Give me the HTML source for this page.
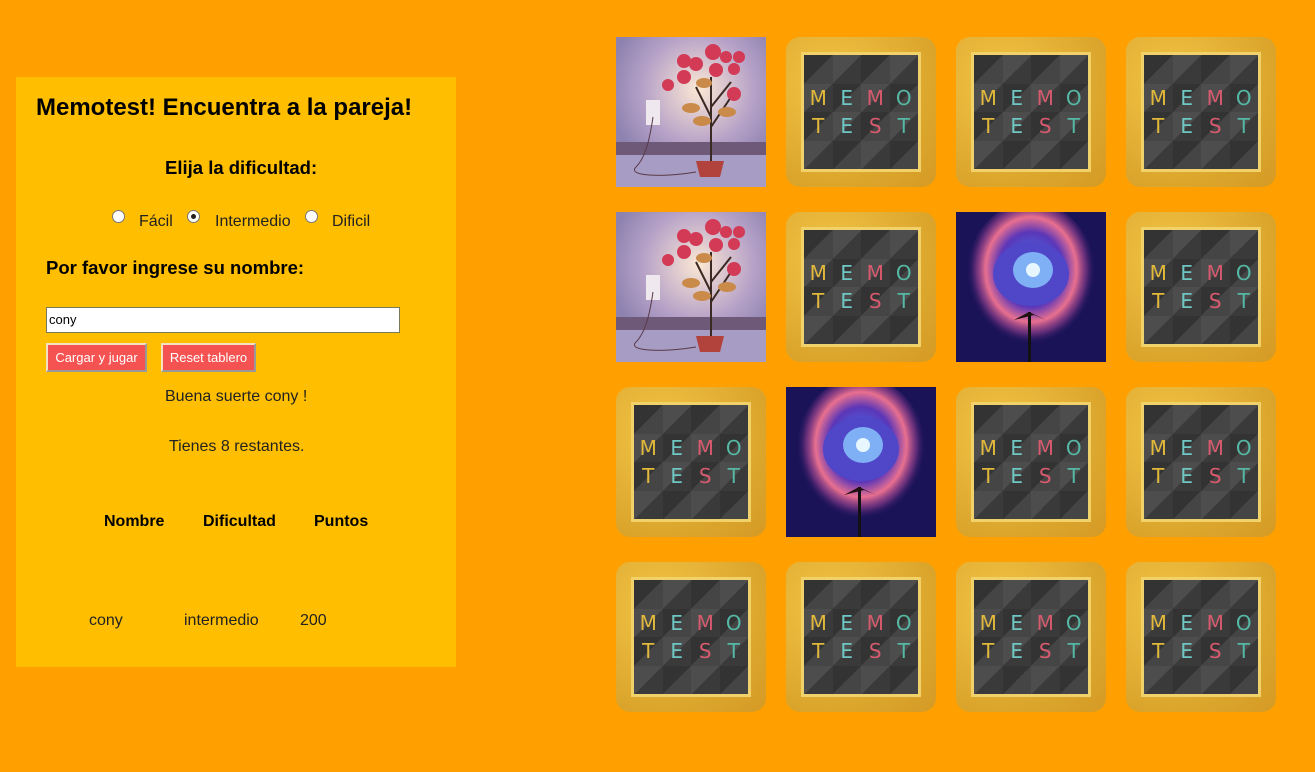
<!DOCTYPE html>
<html><head><meta charset="utf-8"><style>
body{margin:0;width:1315px;height:772px;background:#ffa000;font-family:"Liberation Sans",Arial,sans-serif;position:relative;overflow:hidden}
.a{position:absolute;white-space:nowrap}
#panel{position:absolute;left:16px;top:77px;width:440px;height:590px;background:#ffbf00}
.radio{position:absolute;width:11px;height:11px;border-radius:50%;background:#fff;border:1px solid #777}
.radio.on::after{content:"";position:absolute;left:3px;top:3px;width:5px;height:5px;border-radius:50%;background:#222}
.btn{position:absolute;height:29px;background:#f55252;color:#fff;font-size:13px;line-height:25px;text-align:center;border:2px solid;border-color:#f5e0c0 #999 #999 #f5e0c0;box-sizing:border-box}
.card{position:absolute;width:150px;height:150px}
.memo{border-radius:14px;background:radial-gradient(circle at 30% 30%,#f2c445,#dba52c 70%,#d49a25)}
.memo .in{position:absolute;left:15px;top:15px;width:114px;height:114px;border:3px solid #f1d26a;display:grid;grid-template-columns:repeat(4,1fr);grid-template-rows:repeat(4,1fr);background:#3a3a3a}
.memo .in div{font-size:20px;text-align:center;line-height:28.5px;font-family:"DejaVu Sans",sans-serif;font-weight:normal}
.c1{background:linear-gradient(135deg,#4d4d4d 50%,#3a3a3a 50%)}
.c2{background:linear-gradient(135deg,#333 50%,#454545 50%)}
</style></head><body>
<div id="panel"></div>
<div class="a" style="left:36px;top:94px;font-size:24px;font-weight:bold">Memotest! Encuentra a la pareja!</div>
<div class="a" style="left:165px;top:157px;font-size:18.5px;font-weight:bold">Elija la dificultad:</div>
<div class="radio" style="left:112px;top:210px"></div><div class="a" style="left:139px;top:213px;font-size:16px;color:#222">Fácil</div>
<div class="radio on" style="left:187px;top:210px"></div><div class="a" style="left:215px;top:213px;font-size:16px;color:#222">Intermedio</div>
<div class="radio" style="left:305px;top:210px"></div><div class="a" style="left:332px;top:213px;font-size:16px;color:#222">Dificil</div>
<div class="a" style="left:46px;top:257px;font-size:18.5px;font-weight:bold">Por favor ingrese su nombre:</div>
<div class="a" style="left:46px;top:307px;height:26px;background:#fff;border:1px solid #7a7a5a;font-size:13px;line-height:24px;padding-left:2px;box-sizing:border-box;width:354px">cony</div>
<div class="btn" style="left:46px;top:343px;width:101px">Cargar y jugar</div>
<div class="btn" style="left:161px;top:343px;width:95px">Reset tablero</div>
<div class="a" style="left:165px;top:388px;font-size:16px;color:#222">Buena suerte cony !</div>
<div class="a" style="left:169px;top:438px;font-size:16px;color:#222">Tienes 8 restantes.</div>
<div class="a" style="left:104px;top:513px;font-size:16px;font-weight:bold">Nombre</div>
<div class="a" style="left:203px;top:513px;font-size:16px;font-weight:bold">Dificultad</div>
<div class="a" style="left:314px;top:513px;font-size:16px;font-weight:bold">Puntos</div>
<div class="a" style="left:89px;top:612px;font-size:16px;color:#222">cony</div>
<div class="a" style="left:184px;top:612px;font-size:16px;color:#222">intermedio</div>
<div class="a" style="left:300px;top:612px;font-size:16px;color:#222">200</div>

<svg width="0" height="0" style="position:absolute">
<defs>
<radialGradient id="pg" cx="0.55" cy="0.35" r="0.6"><stop offset="0" stop-color="#fbe8d4"/><stop offset="0.6" stop-color="#b8a3c8"/><stop offset="1" stop-color="#8d82b0"/></radialGradient>
<radialGradient id="fg" cx="0.5" cy="0.45" r="0.5"><stop offset="0" stop-color="#cfe8ff"/><stop offset="0.25" stop-color="#4a5ed8"/><stop offset="0.5" stop-color="#5b36b8"/><stop offset="0.7" stop-color="#e9708f"/><stop offset="0.85" stop-color="#b04a9a" stop-opacity="0.5"/><stop offset="1" stop-color="#1a1060" stop-opacity="0"/></radialGradient>
<symbol id="plant" viewBox="0 0 150 150">
<rect width="150" height="150" fill="url(#pg)"/>
<rect y="105" width="150" height="13" fill="#6e5a78"/>
<rect y="118" width="150" height="32" fill="#a79cc4"/>
<rect x="30" y="63" width="14" height="25" fill="#efe9ef"/>
<path d="M37 80 C34 100 30 120 20 130 S50 140 80 135" stroke="#5a3a4a" fill="none"/>
<path d="M95 125 V40 M95 80 L80 50 M95 70 L115 45 M95 90 L115 60" stroke="#3a2a22" stroke-width="2" fill="none"/>
<g fill="#d23a55"><circle cx="97" cy="15" r="8"/><circle cx="80" cy="27" r="7"/><circle cx="68" cy="24" r="7"/><circle cx="110" cy="20" r="6"/><circle cx="123" cy="20" r="6"/><circle cx="100" cy="33" r="7"/><circle cx="118" cy="32" r="6"/><circle cx="68" cy="40" r="7"/><circle cx="52" cy="48" r="6"/><circle cx="118" cy="57" r="7"/></g>
<g fill="#c98a4a"><ellipse cx="88" cy="46" rx="8" ry="5"/><ellipse cx="75" cy="71" rx="9" ry="5"/><ellipse cx="86" cy="84" rx="9" ry="5"/><ellipse cx="111" cy="75" rx="9" ry="5"/></g>
<path d="M80 124 H108 L104 140 H84 Z" fill="#b2423c"/>
</symbol>
<symbol id="flower" viewBox="0 0 150 150">
<rect width="150" height="150" fill="#1a1358"/>
<ellipse cx="75" cy="65" rx="65" ry="75" fill="url(#fg)"/>
<ellipse cx="75" cy="62" rx="38" ry="32" fill="#5046c8"/>
<ellipse cx="77" cy="58" rx="20" ry="18" fill="#7fb0f5"/>
<circle cx="77" cy="58" r="7" fill="#e8f6ff"/>
<rect x="72" y="100" width="3" height="50" fill="#111"/>
<path d="M58 108 L73 100 L90 108 L78 103 Z" fill="#201010"/>
</symbol>
</defs></svg>

<div id="grid"></div>
<script>
var xs=[616,786,956,1126],ys=[37,212,387,562];
var open={"0,0":"plant","1,0":"plant","1,2":"flower","2,1":"flower"};
var L=[["#e2b93b","M"],["#6fc7c4","E"],["#d75a6e","M"],["#55b8a4","O"],["#e2b93b","T"],["#6fc7c4","E"],["#d75a6e","S"],["#55b8a4","T"]];
var h="";
for(var r=0;r<4;r++)for(var c=0;c<4;c++){
 var k=r+","+c;
 if(open[k]){h+='<svg class="card" style="left:'+xs[c]+'px;top:'+ys[r]+'px" viewBox="0 0 150 150"><use href="#'+open[k]+'"/></svg>';continue;}
 var g="";
 for(var i=0;i<16;i++){var cls=((i+Math.floor(i/4))%2)?"c1":"c2";var t="",col="";if(i>=4&&i<12){col=L[i-4][0];t=L[i-4][1];}
 g+='<div class="'+cls+'" style="color:'+col+'">'+t+'</div>';}
 h+='<div class="card memo" style="left:'+xs[c]+'px;top:'+ys[r]+'px"><div class="in">'+g+'</div></div>';
}
document.getElementById("grid").innerHTML=h;
</script>
</body></html>
